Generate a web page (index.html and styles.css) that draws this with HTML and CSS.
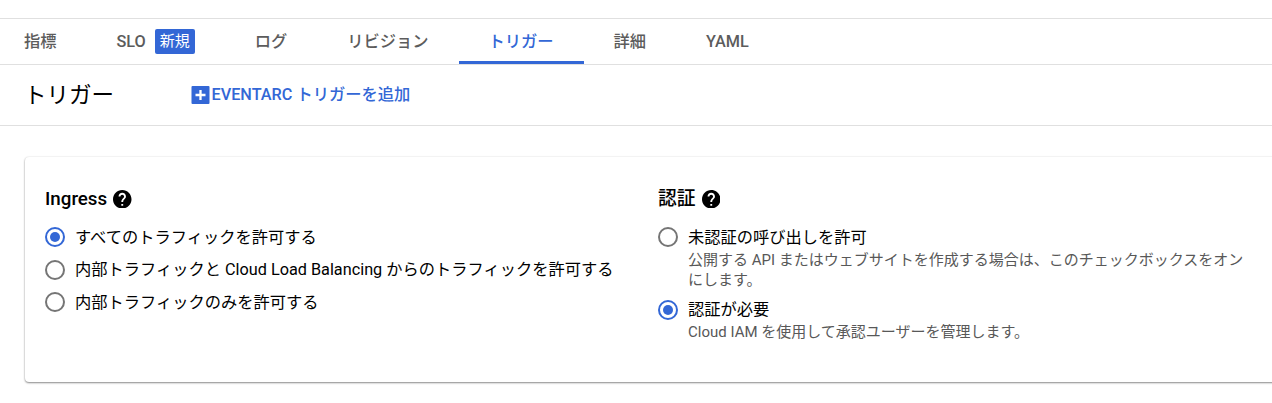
FILE: index.html
```html
<!DOCTYPE html>
<html lang="ja">
<head>
<meta charset="utf-8">
<title>トリガー</title>
<link rel="stylesheet" href="styles.css">
</head>
<body>
<nav class="tabs">
  <a class="tab">指標</a>
  <a class="tab tab-slo"><span>SLO</span><span class="badge">新規</span></a>
  <a class="tab">ログ</a>
  <a class="tab">リビジョン</a>
  <a class="tab active">トリガー</a>
  <a class="tab">詳細</a>
  <a class="tab">YAML</a>
</nav>
<header class="toolbar">
  <h1 class="title">トリガー</h1>
  <button class="add"><svg class="add-icon" viewBox="0 0 18 18"><rect width="18" height="18" rx="1" fill="#3367d6"/><path d="M9 4v10M4 9h10" stroke="#fff" stroke-width="2.3"/></svg><span>EVENTARC トリガーを追加</span></button>
</header>
<main class="card">
  <section class="column">
    <h2 class="heading">Ingress<svg class="help" viewBox="2 2 20 20"><path d="M12 2C6.48 2 2 6.48 2 12s4.480 10 10 10 10-4.480 10-10S17.520 2 12 2zm1 17h-2v-2h2v2zm2.070-7.750l-.9.920C13.450 12.900 13 13.500 13 15h-2v-.5c0-1.100.45-2.100 1.170-2.830l1.240-1.260c.37-.36.59-.86.59-1.410 0-1.100-.9-2-2-2s-2 .9-2 2H8c0-2.210 1.790-4 4-4s4 1.790 4 4c0 .88-.36 1.680-.93 2.250z"/></svg></h2>
    <label class="option"><span class="radio checked"></span><span class="label">すべてのトラフィックを許可する</span></label>
    <label class="option"><span class="radio"></span><span class="label">内部トラフィックと Cloud Load Balancing からのトラフィックを許可する</span></label>
    <label class="option"><span class="radio"></span><span class="label">内部トラフィックのみを許可する</span></label>
  </section>
  <section class="column auth">
    <h2 class="heading">認証<svg class="help" viewBox="2 2 20 20"><path d="M12 2C6.48 2 2 6.48 2 12s4.480 10 10 10 10-4.480 10-10S17.520 2 12 2zm1 17h-2v-2h2v2zm2.070-7.750l-.9.920C13.450 12.900 13 13.500 13 15h-2v-.5c0-1.100.45-2.100 1.170-2.830l1.240-1.260c.37-.36.59-.86.59-1.410 0-1.100-.9-2-2-2s-2 .9-2 2H8c0-2.210 1.790-4 4-4s4 1.790 4 4c0 .88-.36 1.680-.93 2.250z"/></svg></h2>
    <label class="option"><span class="radio"></span><span class="label">未認証の呼び出しを許可<small class="hint">公開する API またはウェブサイトを作成する場合は、このチェックボックスをオンにします。</small></span></label>
    <label class="option"><span class="radio checked"></span><span class="label">認証が必要<small class="hint">Cloud IAM を使用して承認ユーザーを管理します。</small></span></label>
  </section>
</main>
</body>
</html>
```
FILE: styles.css
```css
* { box-sizing: border-box; }
body {
  margin: 0;
  padding-top: 18px;
  height: 403px;
  overflow: hidden;
  background: #fff;
  color: #000;
  font: 16.25px/20px Roboto, "Noto Sans CJK JP", sans-serif;
}
.tabs {
  display: flex;
  height: 47px;
  border-top: 1px solid #e0e0e0;
  border-bottom: 1px solid #e0e0e0;
  color: #5c5c5c;
  font-weight: 500;
}
.tab {
  display: flex;
  align-items: center;
  flex: none;
  padding: 3px 30px 0;
  border-bottom: 3px solid transparent;
}
.tab:first-child { padding-left: 24px; }
.tab.active {
  color: #3367d6;
  border-bottom-color: #3367d6;
}
.tab-slo { gap: 9px; }
.badge {
  height: 25px;
  padding: 0 5px;
  border-radius: 2px;
  background: #3367d6;
  color: #fff;
  font-size: 15px;
  font-weight: 400;
  line-height: 24px;
}
.toolbar {
  display: flex;
  align-items: center;
  height: 61px;
  padding-left: 24px;
  border-bottom: 1px solid #e0e0e0;
}
.title {
  margin: 0;
  width: 167px;
  font-size: 22.5px;
  font-weight: 400;
}
.add {
  display: flex;
  align-items: center;
  padding: 0;
  border: 0;
  background: none;
  color: #3367d6;
  font: inherit;
  font-weight: 500;
}
.add-icon { width: 19px; height: 18px; margin-right: 1.5px; }
.card {
  display: grid;
  grid-template-columns: 613px 590px;
  width: 1270px;
  height: 225px;
  margin: 31px 0 0 25px;
  padding: 28px 20px 0;
  border-radius: 4px;
  box-shadow: 0 1px 2px rgba(0, 0, 0, .45), 0 0 2px rgba(0, 0, 0, .1);
}
.heading {
  display: flex;
  align-items: center;
  gap: 6px;
  height: 27px;
  margin: 0 0 15px;
  font-size: 18.75px;
  font-weight: 500;
}
.help { width: 18.5px; height: 18.5px; margin-top: 1px; }
.option {
  display: flex;
  gap: 10px;
  height: 20px;
  margin-bottom: 12.5px;
}
.label { padding-top: .5px; }
.auth .option {
  height: auto;
  margin-bottom: 10px;
}
.radio {
  flex: none;
  display: grid;
  place-items: center;
  width: 20px;
  height: 20px;
  border: 2px solid #757575;
  border-radius: 50%;
}
.radio.checked { border-color: #3367d6; }
.radio.checked::after {
  content: "";
  width: 10px;
  height: 10px;
  border-radius: 50%;
  background: #3367d6;
}
.hint {
  display: block;
  margin-top: 2px;
  color: #585858;
  font-size: 15px;
  line-height: 20px;
}
```
